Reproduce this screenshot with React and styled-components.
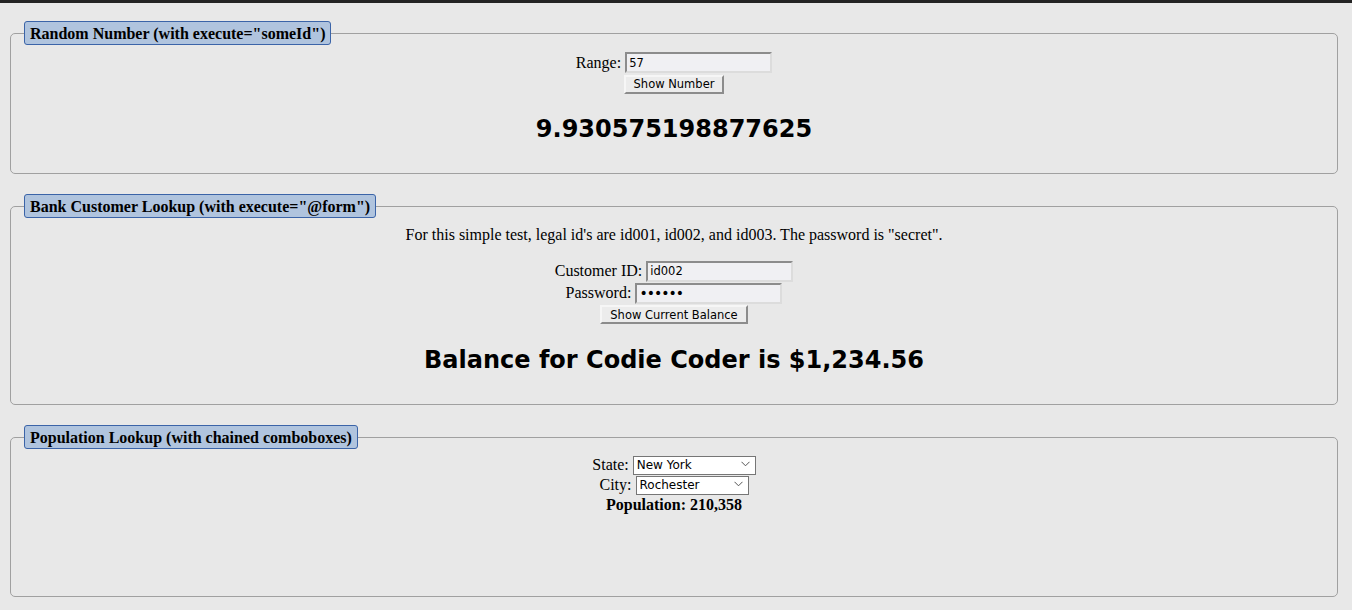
import styled, { createGlobalStyle } from "styled-components";

const GlobalStyle = createGlobalStyle`
  html, body {
    margin: 0;
    padding: 0;
    background: #e8e8e8;
    font-family: "Liberation Serif", "Times New Roman", serif;
    font-size: 16px;
    color: #000;
  }
`;

const TopBar = styled.div`
  height: 3px;
  background: #232323;
`;

const Page = styled.div`
  padding: 18px 14px 0 10px;
`;

const Section = styled.fieldset`
  margin: 0 0 20px 0;
  padding: 6px 12px ${(p) => p.$bottom || 10}px 12px;
  border: 1px solid #a0a0a0;
  border-radius: 5px;
  text-align: center;
  min-width: 0;
`;

const Legend = styled.legend`
  margin-left: 1px;
  padding: 0 5px;
  height: 24px;
  line-height: 23px;
  box-sizing: border-box;
  background: #b0c4de;
  border: 1px solid #3b64a8;
  border-radius: 3px;
  font-weight: bold;
  font-size: 16px;
  text-align: left;
`;

const Row = styled.div`
  display: flex;
  justify-content: center;
  align-items: center;
  gap: 4px;
  height: ${(p) => p.$h || 22}px;
`;

const Label = styled.span`
  font-size: 16px;
`;

const TextInput = styled.input`
  box-sizing: border-box;
  width: 147px;
  height: 21px;
  padding: 1px 2px;
  background: #f0f0f3;
  border: 2px solid;
  border-color: #8c8c8c #dcdcdc #dcdcdc #8c8c8c;
  font-family: "DejaVu Sans", Verdana, sans-serif;
  font-size: 11.5px;
  color: #000;
  outline: none;

  &[type="password"] {
    font-size: 14px;
    letter-spacing: -1px;
  }
`;

const Button = styled.button`
  box-sizing: border-box;
  height: 19px;
  padding: 0 8px;
  background: #ececec;
  border: 2px solid;
  border-color: #f6f6f6 #8c8c8c #8c8c8c #f6f6f6;
  font-family: "DejaVu Sans", Verdana, sans-serif;
  font-size: 11.5px;
  color: #000;
  line-height: 14px;
`;

const Result = styled.h2`
  margin: 21px 0 20px;
  font-family: "DejaVu Sans", Verdana, sans-serif;
  font-size: 24px;
  line-height: 28px;
  font-weight: bold;
`;

const Note = styled.p`
  margin: 1px 0 16px;
  line-height: 19px;
`;

const SelectWrap = styled.div`
  position: relative;
  display: inline-block;
`;

const Select = styled.select`
  appearance: none;
  box-sizing: border-box;
  width: ${(p) => p.$w}px;
  height: 19px;
  padding: 0 18px 0 3px;
  background: #fff;
  border: 1px solid #767676;
  border-radius: 0;
  font-family: "DejaVu Sans", Verdana, sans-serif;
  font-size: 12px;
  color: #000;
`;

const Chevron = styled.svg`
  position: absolute;
  right: 6px;
  top: 6px;
  pointer-events: none;
`;

const Population = styled.div`
  font-weight: bold;
  line-height: 19px;
`;

function Combo({ width, value, options }) {
  return (
    <SelectWrap>
      <Select $w={width} defaultValue={value}>
        {options.map((o) => (
          <option key={o}>{o}</option>
        ))}
      </Select>
      <Chevron width="9" height="6" viewBox="0 0 9 6">
        <path d="M0.5 0.8 L4.5 4.8 L8.5 0.8" fill="none" stroke="#555" strokeWidth="1" />
      </Chevron>
    </SelectWrap>
  );
}

export default function App() {
  return (
    <>
      <GlobalStyle />
      <TopBar />
      <Page>
        <Section>
          <Legend>Random Number (with execute="someId")</Legend>
          <Row $h={23}>
            <Label>Range:</Label>
            <TextInput defaultValue="57" />
          </Row>
          <Row $h={20}>
            <Button>Show Number</Button>
          </Row>
          <Result>9.930575198877625</Result>
        </Section>

        <Section>
          <Legend>Bank Customer Lookup (with execute="@form")</Legend>
          <Note>
            For this simple test, legal id's are id001, id002, and id003. The
            password is "secret".
          </Note>
          <Row>
            <Label>Customer ID:</Label>
            <TextInput defaultValue="id002" />
          </Row>
          <Row>
            <Label>Password:</Label>
            <TextInput type="password" defaultValue="secret" />
          </Row>
          <Row $h={21}>
            <Button>Show Current Balance</Button>
          </Row>
          <Result>Balance for Codie Coder is $1,234.56</Result>
        </Section>

        <Section $bottom={82}>
          <Legend>Population Lookup (with chained comboboxes)</Legend>
          <Row $h={20}>
            <Label>State:</Label>
            <Combo
              width={123}
              value="New York"
              options={["California", "New York", "Texas"]}
            />
          </Row>
          <Row $h={20}>
            <Label>City:</Label>
            <Combo
              width={113}
              value="Rochester"
              options={["Buffalo", "New York", "Rochester", "Syracuse"]}
            />
          </Row>
          <Population>Population: 210,358</Population>
        </Section>
      </Page>
    </>
  );
}
